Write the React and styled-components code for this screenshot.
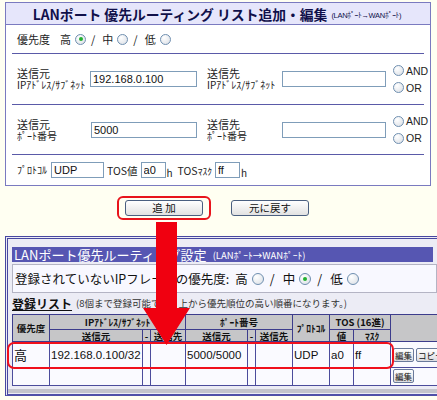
import React from "react"
import styled, { createGlobalStyle } from "styled-components"

const GlobalStyle = createGlobalStyle`
  body {
    margin: 0;
    background: #fffff2;
    font-family: "Liberation Sans", "Noto Sans CJK JP", sans-serif;
    color: #222;
  }
`

const tableCols = [37, 93, 8, 35, 62, 8, 37, 37, 24, 37, 80]

const App = () => {
  return (
    <Screen>
      <GlobalStyle />
      <EditPanel>
        <PanelTitle>
          LANポート 優先ルーティング リスト追加・編集
          <small>(LANﾎﾟｰﾄ→WANﾎﾟｰﾄ)</small>
        </PanelTitle>
        <PanelBody>
          <FormRow $h={28}>
            <FieldLabel $w={43}>優先度</FieldLabel>
            <Choice>高</Choice>
            <Radio $checked />
            <Slash>/</Slash>
            <Choice>中</Choice>
            <Radio />
            <Slash>/</Slash>
            <Choice>低</Choice>
            <Radio />
          </FormRow>
          <FormRow $h={50}>
            <FieldLabel $w={73}>
              送信元
              <small>IPｱﾄﾞﾚｽ/ｻﾌﾞﾈｯﾄ</small>
            </FieldLabel>
            <TextBox $w={107} defaultValue="192.168.0.100" />
            <FieldLabel $w={75} $gap={10}>
              送信先
              <small>IPｱﾄﾞﾚｽ/ｻﾌﾞﾈｯﾄ</small>
            </FieldLabel>
            <TextBox $w={104} defaultValue="" />
            <LogicGroup>
              <LogicOption><Radio />AND</LogicOption>
              <LogicOption><Radio />OR</LogicOption>
            </LogicGroup>
          </FormRow>
          <FormRow $h={49}>
            <FieldLabel $w={74}>
              送信元
              <small>ﾎﾟｰﾄ番号</small>
            </FieldLabel>
            <TextBox $w={106} defaultValue="5000" />
            <FieldLabel $w={75} $gap={10}>
              送信先
              <small>ﾎﾟｰﾄ番号</small>
            </FieldLabel>
            <TextBox $w={104} defaultValue="" />
            <LogicGroup>
              <LogicOption><Radio />AND</LogicOption>
              <LogicOption><Radio />OR</LogicOption>
            </LogicGroup>
          </FormRow>
          <FormRow $h={30} $last>
            <FieldLabel $w={34}><small>ﾌﾟﾛﾄｺﾙ</small></FieldLabel>
            <TextBox $w={53} defaultValue="UDP" />
            <InlineLabel>TOS値</InlineLabel>
            <TextBox $w={25} defaultValue="a0" />
            <Suffix>h</Suffix>
            <InlineLabel $lead={5}>TOS<Kana>ﾏｽｸ</Kana></InlineLabel>
            <TextBox $w={25} defaultValue="ff" />
            <Suffix>h</Suffix>
          </FormRow>
        </PanelBody>
      </EditPanel>

      <ActionBar>
        <HighlightFrame>
          <PushButton $w={78}>追 加</PushButton>
        </HighlightFrame>
        <PushButton $w={78} $gap={20}>元に戻す</PushButton>
      </ActionBar>

      <ListFrame>
        <ListTitle>
          LANポート優先ルーティング設定
          <small>(LANﾎﾟｰﾄ→WANﾎﾟｰﾄ)</small>
        </ListTitle>
        <DefaultBox>
          登録されていないIPフレームの優先度:
          <BigChoice>高</BigChoice>
          <Radio $big />
          <BigSlash>/</BigSlash>
          <BigChoice>中</BigChoice>
          <Radio $big $checked />
          <BigSlash>/</BigSlash>
          <BigChoice>低</BigChoice>
          <Radio $big />
        </DefaultBox>
        <ListHead>
          <strong>登録リスト</strong>
          <span>(8個まで登録可能です。上から優先順位の高い順番になります。)</span>
        </ListHead>
        <RouteTable>
          <colgroup>
            {tableCols.map((w, i) => (
              <col key={i} style={{ width: w }} />
            ))}
          </colgroup>
          <thead>
            <tr style={{ height: 15 }}>
              <Th rowSpan={2}>優先度</Th>
              <Th colSpan={3}>IPｱﾄﾞﾚｽ/ｻﾌﾞﾈｯﾄ</Th>
              <Th colSpan={3}>ﾎﾟｰﾄ番号</Th>
              <Th rowSpan={2}>ﾌﾟﾛﾄｺﾙ</Th>
              <Th colSpan={2}>TOS (16進)</Th>
              <Th rowSpan={2} />
            </tr>
            <tr style={{ height: 12 }}>
              <Th>送信元</Th>
              <Th>-</Th>
              <Th>送信先</Th>
              <Th>送信元</Th>
              <Th>-</Th>
              <Th>送信先</Th>
              <Th>値</Th>
              <Th>ﾏｽｸ</Th>
            </tr>
          </thead>
          <tbody>
            <tr style={{ height: 26 }}>
              <Td $big>高</Td>
              <Td>192.168.0.100/32</Td>
              <Td />
              <Td />
              <Td>5000/5000</Td>
              <Td />
              <Td />
              <Td>UDP</Td>
              <Td>a0</Td>
              <Td>ff</Td>
              <Td>
                <ButtonCell>
                  <SmallButton>編集</SmallButton>
                  <SmallButton>コピー</SmallButton>
                </ButtonCell>
              </Td>
            </tr>
            <tr style={{ height: 18 }}>
              <Td />
              <Td />
              <Td />
              <Td />
              <Td />
              <Td />
              <Td />
              <Td />
              <Td />
              <Td />
              <Td $top>
                <ButtonCell>
                  <SmallButton>編集</SmallButton>
                </ButtonCell>
              </Td>
            </tr>
          </tbody>
        </RouteTable>
        <GrayBar />
      </ListFrame>

      <RowMark />
      <Arrow viewBox="0 0 47 123" width="47" height="123">
        <path d="M13 0H34V86H47L23.5 123L0 86H13Z" fill="#f00010" />
      </Arrow>
    </Screen>
  )
}

const Screen = styled.div`
  position: relative;
  width: 437px;
  height: 400px;
  overflow: hidden;
  padding-top: 2px;
  box-sizing: border-box;
`

const EditPanel = styled.div`
  margin-left: 5px;
  width: 426px;
  box-sizing: border-box;
  border: 1px solid #7a7ac0;
  background: #fff;
`

const PanelTitle = styled.div`
  height: 21px;
  background: #e6e6fb;
  border-bottom: 1px solid #7a7ac0;
  display: flex;
  align-items: center;
  justify-content: center;
  gap: 4px;
  padding-right: 2px;
  font-family: "Noto Sans CJK JP", sans-serif;
  font-weight: bold;
  font-size: 13.8px;
  color: #10104a;
  small {
    font-family: "Liberation Sans", "Noto Sans CJK JP", sans-serif;
    font-size: 7.5px;
    letter-spacing: -0.3px;
    font-weight: normal;
    padding-top: 2px;
  }
`

const PanelBody = styled.div`
  padding: 0 6px;
`

const FormRow = styled.div`
  display: flex;
  align-items: center;
  height: ${({ $h }) => $h}px;
  padding-left: 5px;
  border-bottom: ${({ $last }) => ($last ? "none" : "1px solid #5a5aa8")};
  font-family: "Noto Sans CJK JP", sans-serif;
  font-size: 11px;
  color: #222;
`

const FieldLabel = styled.div`
  width: ${({ $w }) => $w}px;
  margin-left: ${({ $gap }) => $gap || 0}px;
  flex-shrink: 0;
  font-size: 11px;
  line-height: 12px;
  small {
    display: block;
    font-size: 10px;
    line-height: 12px;
  }
`

const Choice = styled.span`
  margin-right: 4px;
`

const Slash = styled.span`
  margin: 0 7px 0 5px;
`

const Radio = styled.span`
  display: inline-flex;
  align-items: center;
  justify-content: center;
  flex-shrink: 0;
  width: ${({ $big }) => ($big ? 10 : 9)}px;
  height: ${({ $big }) => ($big ? 10 : 9)}px;
  border-radius: 50%;
  border: 1px solid #6f8fb0;
  background: radial-gradient(circle at 35% 30%, #ffffff, #d8dde4);
  &::after {
    content: "";
    display: ${({ $checked }) => ($checked ? "block" : "none")};
    width: 4px;
    height: 4px;
    border-radius: 50%;
    background: #22b030;
  }
`

const TextBox = styled.input`
  width: ${({ $w }) => $w}px;
  height: 16px;
  box-sizing: border-box;
  flex-shrink: 0;
  border: 1px solid #7f9db9;
  padding: 0 2px;
  font: 11px "Liberation Sans", sans-serif;
  color: #111;
  background: #fff;
  outline: none;
`

const LogicGroup = styled.div`
  display: flex;
  flex-direction: column;
  gap: 5px;
  margin-left: 7px;
  font-family: "Liberation Sans", sans-serif;
  font-size: 10.5px;
`

const LogicOption = styled.label`
  display: flex;
  align-items: center;
  gap: 2px;
`

const InlineLabel = styled.span`
  margin: 0 3px 0 ${({ $lead }) => $lead || 3}px;
  font-size: 10.5px;
  white-space: nowrap;
`

const Kana = styled.span`
  font-size: 9.5px;
`

const Suffix = styled.span`
  align-self: flex-end;
  margin: 0 0 7px 1px;
  width: 6px;
  font-size: 10px;
  line-height: 10px;
`

const ActionBar = styled.div`
  display: flex;
  align-items: center;
  height: 24px;
  padding: 10px 0 16px 117px;
`

const HighlightFrame = styled.div`
  display: flex;
  padding: 2px 6px;
  border: 2px solid #e8141c;
  border-radius: 6px;
`

const PushButton = styled.button`
  width: ${({ $w }) => $w}px;
  height: 16px;
  margin-left: ${({ $gap }) => $gap || 0}px;
  padding: 0;
  border: 1px solid #4a5f80;
  border-radius: 3px;
  background: linear-gradient(#ffffff, #e2e2e2);
  font-family: "Noto Sans CJK JP", sans-serif;
  font-size: 10.5px;
  line-height: 14px;
  color: #111;
`

const ListFrame = styled.div`
  width: 440px;
  margin-left: 5px;
  box-sizing: border-box;
  border-top: 3px double #4848a0;
  border-left: 3px double #4848a0;
  border-bottom: 2px solid #5050a8;
  background: #ececf5;
  padding: 8px 0 0 4px;
  overflow: hidden;
`

const ListTitle = styled.div`
  width: 421px;
  height: 15px;
  display: flex;
  align-items: center;
  gap: 6px;
  padding-left: 2px;
  box-sizing: border-box;
  background: #5656b2;
  color: #fff;
  font-family: "Noto Sans CJK JP", sans-serif;
  font-size: 13px;
  white-space: nowrap;
  small {
    font-size: 9.5px;
  }
`

const DefaultBox = styled.div`
  width: 421px;
  height: 27px;
  margin-top: 2px;
  box-sizing: content-box;
  display: flex;
  align-items: center;
  padding-left: 2px;
  border: 1px solid #b4b4c4;
  background: #f8f8ff;
  font-family: "Noto Sans CJK JP", sans-serif;
  font-size: 12.5px;
  white-space: nowrap;
  color: #111;
`

const BigChoice = styled.span`
  margin: 0 4px 0 6px;
`

const BigSlash = styled.span`
  margin: 0 2px 0 6px;
`

const ListHead = styled.div`
  height: 20px;
  display: flex;
  align-items: center;
  gap: 4px;
  font-family: "Noto Sans CJK JP", sans-serif;
  white-space: nowrap;
  strong {
    font-size: 12px;
    text-decoration: underline;
    color: #111;
  }
  span {
    font-size: 9.5px;
    color: #333;
  }
`

const RouteTable = styled.table`
  width: 458px;
  margin-top: 1px;
  table-layout: fixed;
  border-collapse: collapse;
  background: #fafaff;
`

const Th = styled.th`
  background: #c6c6c8;
  border: 1px solid #3c3c8c;
  padding: 0;
  font-family: "Noto Sans CJK JP", sans-serif;
  font-size: 9.5px;
  line-height: 10px;
  font-weight: bold;
  color: #111;
  white-space: nowrap;
  overflow: hidden;
`

const Td = styled.td`
  border: 1px solid #4c4c9c;
  padding: 0 1px;
  vertical-align: ${({ $top }) => ($top ? "top" : "middle")};
  font-family: ${({ $big }) => ($big ? '"Noto Sans CJK JP"' : '"Liberation Sans"')}, sans-serif;
  font-size: ${({ $big }) => ($big ? 13 : 11.5)}px;
  color: #111;
  white-space: nowrap;
  overflow: hidden;
`

const ButtonCell = styled.div`
  display: flex;
  gap: 2px;
  padding: 1px 0 0 1px;
`

const SmallButton = styled.button`
  height: 14px;
  padding: 0 1px;
  border: 1px solid #6a7a9c;
  border-radius: 2px;
  background: linear-gradient(#ffffff, #dcdce0);
  font-family: "Noto Sans CJK JP", sans-serif;
  font-size: 8.5px;
  line-height: 12px;
  color: #111;
  white-space: nowrap;
`

const GrayBar = styled.div`
  height: 4px;
  margin: 3px 0 1px -4px;
  background: #c4c4cc;
`

const RowMark = styled.div`
  position: absolute;
  left: 7px;
  top: 342px;
  width: 387px;
  height: 27px;
  box-sizing: border-box;
  border: 2px solid #f0101c;
  border-radius: 7px;
`

const Arrow = styled.svg`
  position: absolute;
  left: 143px;
  top: 222px;
`

export default App
